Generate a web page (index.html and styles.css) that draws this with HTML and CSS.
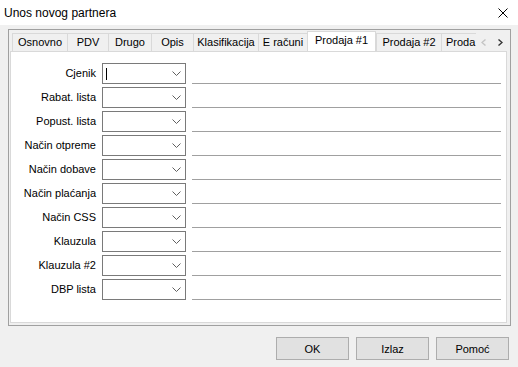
FILE: index.html
```html
<!doctype html>
<html>
	<head>
		<meta charset="utf-8">
		<link rel="stylesheet" href="styles.css">
	</head>
	<body>
		<div class="titlebar">
			<span class="title">Unos novog partnera</span>
			<svg class="close" width="10" height="10" viewBox="0 0 10 10">
				<path d="M0.5 0.5 L9.5 9.5 M9.5 0.5 L0.5 9.5" stroke="#000" stroke-width="1" fill="none"/>
			</svg>
		</div>

		<div class="frame">
			<div class="tabstrip">
				<div class="tabs">
					<div class="tab tab-osnovno">Osnovno</div>
					<div class="tab tab-pdv">PDV</div>
					<div class="tab tab-drugo">Drugo</div>
					<div class="tab tab-opis">Opis</div>
					<div class="tab tab-klas">Klasifikacija</div>
					<div class="tab tab-eracuni">E računi</div>
					<div class="tab tab-active">Prodaja #1</div>
					<div class="tab tab-prodaja2">Prodaja #2</div>
					<div class="tab tab-prodaja3">Proda</div>
				</div>
				<div class="scroller">
					<svg width="5" height="7" viewBox="0 0 5 7"><path d="M4.5 0.5 L1 3.5 L4.5 6.5" stroke="#c4c4c4" stroke-width="1.4" fill="none"/></svg>
					<svg width="5" height="7" viewBox="0 0 5 7"><path d="M0.5 0.5 L4 3.5 L0.5 6.5" stroke="#333" stroke-width="1.4" fill="none"/></svg>
				</div>
			</div>

			<div class="panel">
				<div class="row">
					<label class="lbl">Cjenik</label>
					<div class="combo"><span class="caret"></span><svg class="chev" width="9" height="5" viewBox="0 0 9 5"><path d="M0.5 0.5 L4.5 4.5 L8.5 0.5" stroke="#606060" fill="none"/></svg></div>
					<div class="field"></div>
				</div>
				<div class="row">
					<label class="lbl">Rabat. lista</label>
					<div class="combo"><svg class="chev" width="9" height="5" viewBox="0 0 9 5"><path d="M0.5 0.5 L4.5 4.5 L8.5 0.5" stroke="#606060" fill="none"/></svg></div>
					<div class="field"></div>
				</div>
				<div class="row">
					<label class="lbl">Popust. lista</label>
					<div class="combo"><svg class="chev" width="9" height="5" viewBox="0 0 9 5"><path d="M0.5 0.5 L4.5 4.5 L8.5 0.5" stroke="#606060" fill="none"/></svg></div>
					<div class="field"></div>
				</div>
				<div class="row">
					<label class="lbl">Način otpreme</label>
					<div class="combo"><svg class="chev" width="9" height="5" viewBox="0 0 9 5"><path d="M0.5 0.5 L4.5 4.5 L8.5 0.5" stroke="#606060" fill="none"/></svg></div>
					<div class="field"></div>
				</div>
				<div class="row">
					<label class="lbl">Način dobave</label>
					<div class="combo"><svg class="chev" width="9" height="5" viewBox="0 0 9 5"><path d="M0.5 0.5 L4.5 4.5 L8.5 0.5" stroke="#606060" fill="none"/></svg></div>
					<div class="field"></div>
				</div>
				<div class="row">
					<label class="lbl">Način plaćanja</label>
					<div class="combo"><svg class="chev" width="9" height="5" viewBox="0 0 9 5"><path d="M0.5 0.5 L4.5 4.5 L8.5 0.5" stroke="#606060" fill="none"/></svg></div>
					<div class="field"></div>
				</div>
				<div class="row">
					<label class="lbl">Način CSS</label>
					<div class="combo"><svg class="chev" width="9" height="5" viewBox="0 0 9 5"><path d="M0.5 0.5 L4.5 4.5 L8.5 0.5" stroke="#606060" fill="none"/></svg></div>
					<div class="field"></div>
				</div>
				<div class="row">
					<label class="lbl">Klauzula</label>
					<div class="combo"><svg class="chev" width="9" height="5" viewBox="0 0 9 5"><path d="M0.5 0.5 L4.5 4.5 L8.5 0.5" stroke="#606060" fill="none"/></svg></div>
					<div class="field"></div>
				</div>
				<div class="row">
					<label class="lbl">Klauzula #2</label>
					<div class="combo"><svg class="chev" width="9" height="5" viewBox="0 0 9 5"><path d="M0.5 0.5 L4.5 4.5 L8.5 0.5" stroke="#606060" fill="none"/></svg></div>
					<div class="field"></div>
				</div>
				<div class="row">
					<label class="lbl">DBP lista</label>
					<div class="combo"><svg class="chev" width="9" height="5" viewBox="0 0 9 5"><path d="M0.5 0.5 L4.5 4.5 L8.5 0.5" stroke="#606060" fill="none"/></svg></div>
					<div class="field"></div>
				</div>
			</div>
		</div>

		<div class="buttons">
			<button class="btn">OK</button>
			<button class="btn">Izlaz</button>
			<button class="btn">Pomoć</button>
		</div>
	</body>
</html>
```

FILE: styles.css
```css
body {
	margin: 0;
	background: #f0f0f0;
	font-family: "Liberation Sans", Arial, sans-serif;
	font-size: 11px;
	color: #000;
}

.titlebar {
	display: flex;
	align-items: center;
	justify-content: space-between;
	height: 25px;
	padding: 0 10px 0 4px;
	background: #fff;
}
	.title {
		font-size: 12px;
		padding-top: 1px;
	}
	.close {
		display: block;
		margin-top: 1px;
	}

.frame {
	margin: 4px 7px 0 8px;
	height: 297px;
	box-sizing: border-box;
	border: 1px solid #a0a0a0;
	padding-top: 1px;
}

.tabstrip {
	display: flex;
	height: 20px;
	margin: 0 3px 0 3px;
}

.tabs {
	display: flex;
	align-items: flex-end;
	width: 464px;
	overflow: hidden;
}

.tab {
	flex-shrink: 0;
	box-sizing: border-box;
	height: 18px;
	line-height: 17px;
	text-align: center;
	white-space: nowrap;
	background: #f0f0f0;
	border-top: 1px solid #d9d9d9;
	border-left: 1px solid #d9d9d9;
}
.tab-osnovno { width: 55px; }
.tab-pdv { width: 41px; }
.tab-drugo { width: 43px; }
.tab-opis { width: 42px; }
.tab-klas { width: 65px; }
.tab-eracuni { width: 49px; }
.tab-prodaja2 { width: 65px; }
.tab-prodaja3 { width: 35px; text-align: left; padding-left: 4px; }

.tab-active {
	position: relative;
	z-index: 1;
	width: 69px;
	height: 21px;
	line-height: 16px;
	margin-bottom: -1px;
	background: #fff;
	border-right: 1px solid #d9d9d9;
}

.scroller {
	display: flex;
	align-items: center;
	gap: 12px;
	width: 31px;
	padding: 2px 0 0 5px;
	box-sizing: border-box;
	background: #f0f0f0;
}
	.scroller svg {
		display: block;
	}

.panel {
	margin: 0 3px 0 1px;
	height: 272px;
	box-sizing: border-box;
	background: #fff;
	border: 1px solid #d9d9d9;
	padding-top: 11px;
}

.row {
	display: flex;
	height: 21px;
	margin-bottom: 3px;
}

.lbl {
	width: 85px;
	margin-right: 6px;
	text-align: right;
	line-height: 21px;
	white-space: nowrap;
}

.combo {
	display: flex;
	align-items: center;
	width: 84px;
	box-sizing: border-box;
	border: 1px solid #7a7a7a;
	padding-left: 3px;
	background: #fff;
}
	.caret {
		width: 1px;
		height: 12px;
		background: #000;
	}
	.chev {
		display: block;
		margin-left: auto;
		margin-right: 4px;
	}

.field {
	width: 309px;
	margin-left: 6px;
	box-sizing: border-box;
	border-bottom: 1px solid #a0a0a0;
}

.buttons {
	display: flex;
	justify-content: flex-end;
	gap: 7px;
	margin-top: 11px;
	padding-right: 9px;
}

.btn {
	width: 73px;
	height: 23px;
	padding: 0;
	font-family: "Liberation Sans", Arial, sans-serif;
	font-size: 11px;
	color: #000;
	background: #e1e1e1;
	border: 1px solid #adadad;
}
```
